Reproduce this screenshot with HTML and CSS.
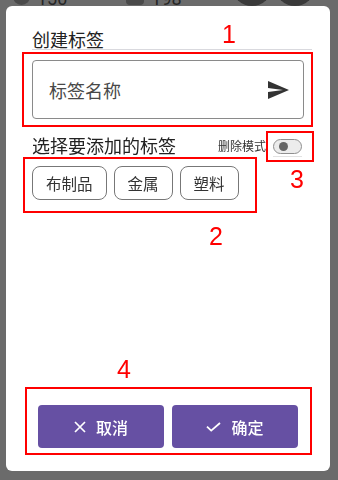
FILE: index.html
```html
<!DOCTYPE html>
<html lang="zh">
<head>
<meta charset="utf-8">
<title>创建标签</title>
<link rel="stylesheet" href="styles.css">
</head>
<body>
<div class="app">
  <div class="topbar">
    <span class="stat-icon round"></span><span class="stat-num">150</span>
    <span class="stat-icon square"></span><span class="stat-num">198</span>
    <span class="spacer"></span>
    <span class="fab"></span><span class="fab"></span>
  </div>
</div>

<div class="dialog">
  <div class="title">创建标签</div>
  <div class="input">
    <span class="placeholder">标签名称</span>
    <svg class="send" width="24" height="24" viewBox="0 0 24 24"><path d="M2.01 21L23 12 2.01 3 2 10l15 2-15 2z" fill="#333"/></svg>
  </div>
  <div class="section-row">
    <span class="section-title">选择要添加的标签</span>
    <span class="mode-label">删除模式</span>
    <span class="toggle"><span class="track"><span class="thumb"></span></span></span>
  </div>
  <div class="chips">
    <span class="chip">布制品</span>
    <span class="chip">金属</span>
    <span class="chip">塑料</span>
  </div>
  <div class="actions">
    <button class="btn"><svg width="12" height="12" viewBox="0 0 12 12"><path d="M1 1L11 11M11 1L1 11" stroke="#fff" stroke-width="1.7" fill="none"/></svg><span>取消</span></button>
    <button class="btn"><svg width="15" height="10" viewBox="0 0 15 10"><path d="M1 4.6L5.2 8.6L14 1" stroke="#fff" stroke-width="1.8" fill="none"/></svg><span>确定</span></button>
  </div>
</div>

<div class="annotations">
  <div class="abox a1"></div>
  <div class="abox a2"></div>
  <div class="abox a3"></div>
  <div class="abox a4"></div>
  <div class="anum n1">1</div>
  <div class="anum n2">2</div>
  <div class="anum n3">3</div>
  <div class="anum n4">4</div>
</div>
</body>
</html>
```

FILE: styles.css
```css
* { box-sizing: border-box; }
html, body {
  margin: 0;
  padding: 0;
  width: 338px;
  height: 480px;
  overflow: hidden;
  background: #6b6b6b;
  font-family: "Noto Sans CJK SC", "Noto Sans", Roboto, sans-serif;
}
.app { height: 480px; }
.topbar {
  display: flex;
  align-items: flex-end;
  height: 40px;
  margin-top: -34px;
  padding: 0 23px 0 13px;
}
.stat-icon {
  width: 17px;
  height: 17px;
  background: #4a4a4a;
  margin-bottom: 1px;
}
.stat-icon.round { border-radius: 50%; }
.stat-icon.square { border-radius: 4px; width: 18px; margin-left: 59px; }
.stat-num {
  font-family: Roboto, "Liberation Sans", sans-serif;
  font-size: 18px;
  line-height: 18px;
  color: #262626;
  margin-left: 7px;
  margin-bottom: -2px;
}
.spacer { flex: 1; }
.fab {
  width: 40px;
  height: 40px;
  border-radius: 50%;
  background: #3a3a3a;
  margin-left: 3px;
}

.dialog {
  position: fixed;
  left: 6px;
  top: 6px;
  width: 324px;
  height: 465px;
  background: #fff;
  border-radius: 6px;
  display: flex;
  flex-direction: column;
}
.title {
  margin: 0 18px 0 26px;
  padding-top: 23px;
  font-size: 18px;
  line-height: 20px;
  color: #222;
  border-bottom: 1px solid #d9d9de;
}
.input {
  margin: 10px 26px 0;
  height: 59px;
  border: 1px solid #8a8a8a;
  border-radius: 4px;
  display: flex;
  align-items: center;
  justify-content: space-between;
  padding: 0 13px 0 16px;
}
.placeholder {
  font-size: 18px;
  color: #484848;
}
.send { display: block; }
.section-row {
  margin-top: 13px;
  height: 26px;
  padding: 0 28px 0 26px;
  display: flex;
  align-items: center;
}
.section-title {
  flex: 1;
  font-size: 18px;
  color: #222;
}
.mode-label {
  font-size: 12px;
  color: #333;
  margin-right: 7px;
}
.toggle {
  display: block;
  padding: 2px 0;
  border-bottom: 1px solid #e2e2e2;
  margin-top: 3px;
}
.track {
  display: block;
  position: relative;
  width: 29px;
  height: 15px;
  border-radius: 8px;
  background: #ececec;
  border: 1px solid #8f8f8f;
}
.thumb {
  position: absolute;
  left: 5px;
  top: 2px;
  width: 9px;
  height: 9px;
  border-radius: 50%;
  background: #666;
}
.chips {
  margin-top: 8px;
  padding-left: 26px;
  display: flex;
  gap: 7px;
}
.chip {
  height: 34px;
  border: 1px solid #777;
  border-radius: 8px;
  padding: 0 13px;
  display: flex;
  align-items: center;
  font-size: 15.5px;
  color: #333;
}
.actions {
  margin-top: auto;
  margin-bottom: 23px;
  padding: 0 32px;
  display: flex;
  gap: 8px;
}
.btn {
  flex: 1;
  height: 43px;
  border: none;
  border-radius: 4px;
  background: #6650a3;
  color: #fff;
  display: flex;
  align-items: center;
  justify-content: center;
  gap: 10px;
  font-family: "Noto Sans CJK SC", sans-serif;
  font-size: 16px;
  font-weight: 500;
  padding: 0;
}
.btn svg { display: block; }

.annotations {
  position: fixed;
  left: 0;
  top: 0;
  width: 338px;
  height: 480px;
  pointer-events: none;
}
.abox {
  position: absolute;
  border: 2px solid #ff0000;
}
.a1 { left: 22px; top: 52px; width: 291px; height: 75px; }
.a2 { left: 23px; top: 157px; width: 234px; height: 56px; }
.a3 { left: 266px; top: 131px; width: 48px; height: 31px; }
.a4 { left: 25px; top: 387px; width: 287px; height: 68px; }
.anum {
  position: absolute;
  width: 20px;
  text-align: center;
  font-family: "Liberation Sans", Arial, sans-serif;
  font-size: 25px;
  line-height: 25px;
  color: #ff0000;
}
.n1 { left: 219px; top: 22px; }
.n2 { left: 206px; top: 224px; }
.n3 { left: 287px; top: 167px; }
.n4 { left: 114px; top: 357px; }
```
